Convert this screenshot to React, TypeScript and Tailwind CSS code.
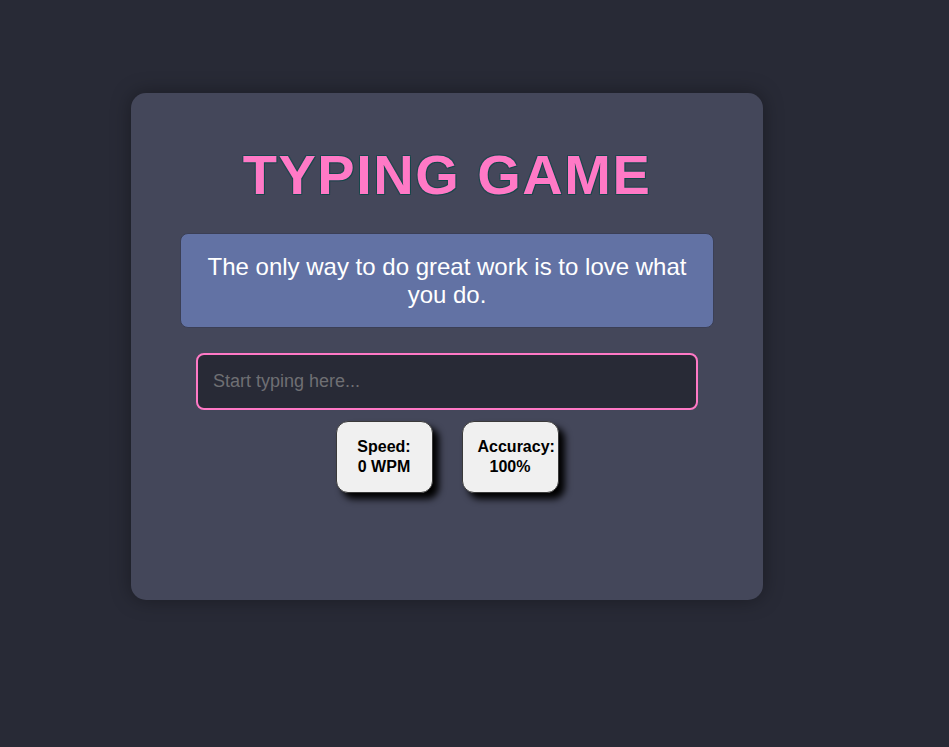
import React from "react";

export default function App() {
  return (
    <div
      className="min-h-[747px] w-full bg-[#282a36] pl-[131px] pt-[93px]"
      style={{ fontFamily: '"Liberation Sans", Arial, sans-serif' }}
    >
      <div className="flex h-[507px] w-[632px] flex-col items-center rounded-[15px] bg-[#44475a] pt-[50px] shadow-[0_0_20px_rgba(0,0,0,0.35)]">
        <h1 className="h-[63px] text-[56px] font-bold leading-[63px] tracking-[1.5px] text-[#ff79c6] [text-shadow:1px_1px_0_rgba(10,70,70,0.7),-1px_-1px_0_rgba(10,70,70,0.5),1px_-1px_0_rgba(10,70,70,0.5),-1px_1px_0_rgba(10,70,70,0.5)]">
          TYPING GAME
        </h1>
        <div className="mt-[27px] w-[534px] rounded-[8px] border border-[#3b3f55] bg-[#6272a4] px-[20px] py-[19px] text-center text-[24px] leading-[27.5px] text-white">
          The only way to do great work is to love what you do.
        </div>
        <input
          type="text"
          placeholder="Start typing here..."
          className="mt-[25px] h-[57px] w-[502px] rounded-[8px] border-2 border-[#ff79c6] bg-[#282a36] px-[15px] text-[18px] text-[#f8f8f2] outline-none placeholder:text-[#6f6f73]"
        />
        <div className="mt-[11px] flex gap-[29px]">
          <div className="h-[72px] w-[97px] rounded-[12px] border border-[#3a3a3a] bg-[#f0f0f0] px-[15px] pt-[15px] text-center text-[16px] font-bold leading-[20px] text-black shadow-[6px_6px_7px_#000]">
            Speed:
            <br />0 WPM
          </div>
          <div className="h-[72px] w-[97px] whitespace-nowrap rounded-[12px] border border-[#3a3a3a] bg-[#f0f0f0] px-[15px] pt-[15px] text-center text-[16px] font-bold leading-[20px] text-black shadow-[6px_6px_7px_#000]">
            <div>Accuracy:</div>
            <div>100%</div>
          </div>
        </div>
      </div>
    </div>
  );
}
